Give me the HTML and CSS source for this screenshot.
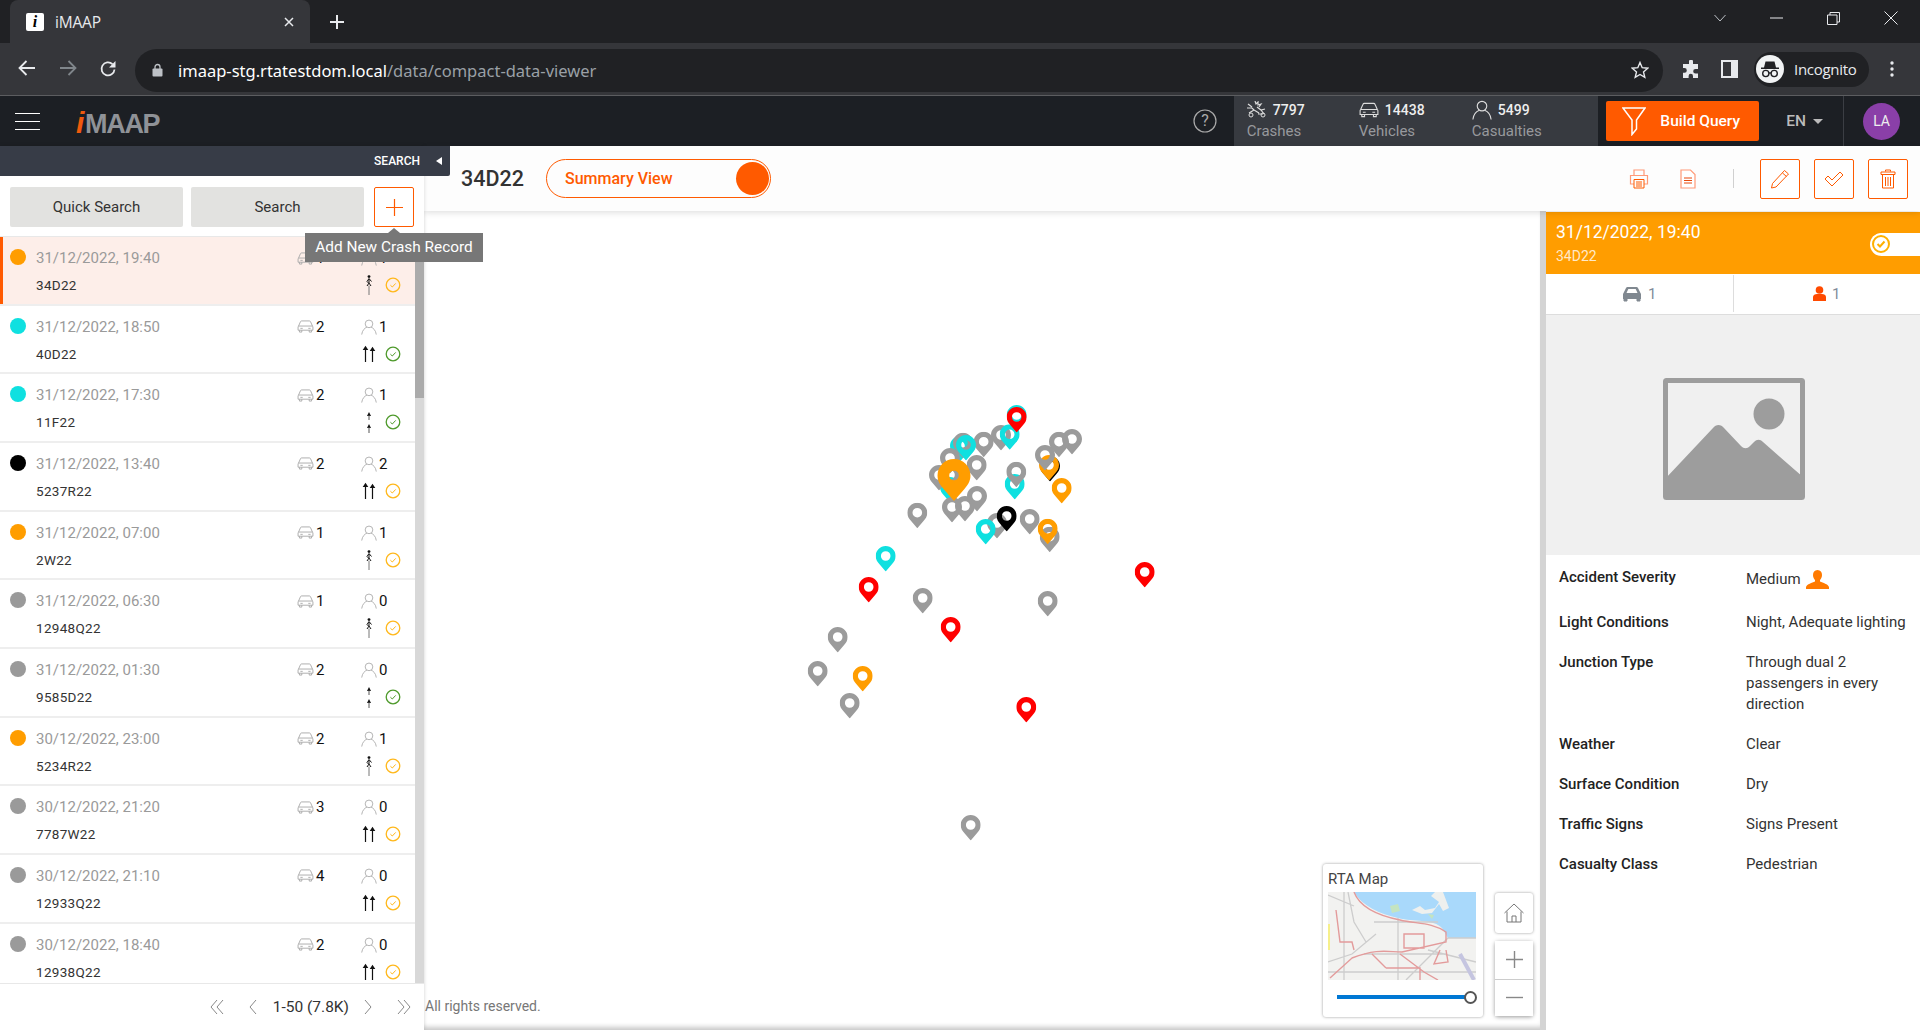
FILE: index.html
```html
<!DOCTYPE html>
<html lang="en">
<head>
<meta charset="utf-8">
<title>iMAAP</title>
<link rel="stylesheet" href="styles.css">
</head>
<body>
<svg class="defs" width="0" height="0" aria-hidden="true">
  <symbol id="car" viewBox="0 0 18 14"><path d="M1.5 6.5 3.6 1.8C3.8 1.3 4.2 1 4.8 1h8.4c.6 0 1 .3 1.2.8l2.1 4.7M1 7.5c0-.6.4-1 1-1h14c.6 0 1 .4 1 1v3.5H1zM2.5 11v2h2.5v-2M13 11v2h2.5v-2M3.5 9h2.5M12 9h2.5" fill="none" stroke="currentColor" stroke-width="1"/></symbol>
  <symbol id="person" viewBox="0 0 18 18"><circle cx="9" cy="5.5" r="4.3" fill="none" stroke="currentColor"/><path d="M.8 17.5C1.4 12.6 4.4 10 6.6 9.2M17.2 17.5C16.6 12.6 13.6 10 11.4 9.2" fill="none" stroke="currentColor"/></symbol>
  <symbol id="check" viewBox="0 0 16 16"><circle cx="8" cy="8" r="6.8" fill="none" stroke="currentColor" stroke-width="1.3"/><path d="M5.4 8.2 7.3 10 10.7 6.4" fill="none" stroke="currentColor" stroke-width="1"/></symbol>
  <symbol id="arrows2" viewBox="0 0 14 18"><path d="M3.5 17V4M10.5 17V5" stroke="#111" stroke-width="1.2" fill="none"/><path d="M3.5 .8 6.3 5H.7zM10.5 1.8 13.3 6H7.7z" fill="#111"/></symbol>
  <symbol id="arrows1" viewBox="0 0 14 22"><path d="M7 1 9 5H5z M7 13 9 17H5z" fill="#111"/><path d="M7 4V9M7 16V22" stroke="#555" stroke-width="1" fill="none"/></symbol>
  <symbol id="ped" viewBox="0 0 14 20"><circle cx="7" cy="1.6" r="1.4" fill="#111"/><path d="M7 3.5 5 6.5l1.500 1.500M7 3.500 9.500 6.500M7 4V8L5 11M7 8 9 11" stroke="#111" stroke-width="1" fill="none"/><path d="M7 10.500V20" stroke="#777" stroke-width="1" fill="none"/></symbol>
  <symbol id="pin" viewBox="0 0 20 25.500"><path fill-rule="evenodd" fill="currentColor" d="M10 0C4.500 0 0 4.500 0 10c0 3.600 1.800 6 3.800 8.300L10 25.500l6.200-7.200C18.200 16 20 13.600 20 10 20 4.500 15.500 0 10 0zM10 5.200a4.800 4.800 0 1 1 0 9.600 4.800 4.800 0 0 1 0-9.600z"/></symbol>
  <symbol id="chev-l" viewBox="0 0 10 16"><path d="M8 1 2 8l6 7" fill="none" stroke="currentColor"/></symbol>
  <symbol id="chev-ll" viewBox="0 0 16 16"><path d="M8 1 2 8l6 7M14 1 8 8l6 7" fill="none" stroke="currentColor"/></symbol>
  <symbol id="chev-r" viewBox="0 0 10 16"><path d="M2 1l6 7-6 7" fill="none" stroke="currentColor"/></symbol>
  <symbol id="chev-rr" viewBox="0 0 16 16"><path d="M2 1l6 7-6 7M8 1l6 7-6 7" fill="none" stroke="currentColor"/></symbol>
</svg>

<div class="tabstrip">
  <div class="tab">
    <span class="favicon"><span class="favicon-i">i</span></span>
    <span class="tab-title">iMAAP</span>
    <svg class="tab-close" width="10" height="10" viewBox="0 0 10 10"><path d="M1 1l8 8M9 1 1 9" stroke="#e8eaed" stroke-width="1.500"/></svg>
  </div>
  <svg class="new-tab" width="14" height="14" viewBox="0 0 14 14"><path d="M7 0v14M0 7h14" stroke="#e8eaed" stroke-width="2"/></svg>
  <div class="window-controls">
    <svg width="12" height="8" viewBox="0 0 12 8"><path d="M.5 1 6 7l5.500-6" fill="none" stroke="#bdc1c6"/></svg>
    <svg width="13" height="2" viewBox="0 0 13 2"><path d="M0 1h13" stroke="#e8eaed"/></svg>
    <svg width="13" height="13" viewBox="0 0 13 13"><path d="M.5 3h9.500v9.500H.5zM3 3V.5h9.500V10H10" fill="none" stroke="#e8eaed"/></svg>
    <svg width="14" height="14" viewBox="0 0 14 14"><path d="M.5.500l13 13M13.500.500l-13 13" stroke="#e8eaed"/></svg>
  </div>
</div>

<div class="toolbar">
  <div class="nav-icons">
    <svg width="18" height="16" viewBox="0 0 18 16"><path d="M17 8H2M8.500 1 1.500 8l7 7" fill="none" stroke="#e8eaed" stroke-width="1.800"/></svg>
    <svg width="18" height="16" viewBox="0 0 18 16"><path d="M1 8h15M9.500 1l7 7-7 7" fill="none" stroke="#80868b" stroke-width="1.800"/></svg>
    <svg width="18" height="18" viewBox="0 0 18 18"><path d="M15.500 9.500A6.500 6.500 0 1 1 13.500 4.200" fill="none" stroke="#e8eaed" stroke-width="1.800"/><path d="M16.500 1v6.500H10z" fill="#e8eaed"/></svg>
  </div>
  <div class="omnibox">
    <svg width="11" height="14" viewBox="0 0 11 14"><path d="M3 6V4a2.500 2.500 0 0 1 5 0v2" fill="none" stroke="#bdc1c6" stroke-width="1.300"/><rect x=".5" y="5.500" width="10" height="8" rx="1" fill="#bdc1c6"/></svg>
    <span class="url"><span class="url-host">imaap-stg.rtatestdom.local</span>/data/compact-data-viewer</span>
    <svg class="star" width="18" height="18" viewBox="0 0 18 18"><path d="M9 1.500 11.200 6.700l5.600.5-4.300 3.700 1.300 5.500L9 13.500l-4.800 2.900 1.300-5.500L1.200 7.200l5.600-.5z" fill="none" stroke="#e8eaed" stroke-width="1.400"/></svg>
  </div>
  <svg class="tool-ext" width="19" height="19" viewBox="0 0 19 19"><path d="M7 1.500a2 2 0 0 1 4 0V4h5v5h-2.500a2.300 2.300 0 0 0 0 4.600H16V18H11v-2a2.200 2.200 0 0 0-4.400 0v2H1v-5.300h1.500a2.300 2.300 0 0 0 0-4.600H1V4h6z" fill="#e8eaed"/></svg>
  <svg class="tool-side" width="17" height="18" viewBox="0 0 17 18"><path d="M0 0h17v18H0zM2 2v14h8V2z" fill="#e8eaed" fill-rule="evenodd"/></svg>
  <div class="incognito">
    <svg width="28" height="28" viewBox="0 0 28 28"><circle cx="14" cy="14" r="14" fill="#f1f3f4"/><path d="M9.500 6.500h9l1.500 6h3v1.500H5v-1.500h3z" fill="#202124"/><circle cx="9.800" cy="18.500" r="3.100" fill="none" stroke="#202124" stroke-width="1.400"/><circle cx="18.200" cy="18.500" r="3.100" fill="none" stroke="#202124" stroke-width="1.400"/><path d="M12.800 18h2.400" stroke="#202124" stroke-width="1.400"/></svg>
    <span class="incognito-label">Incognito</span>
  </div>
  <svg class="tool-menu" width="4" height="16" viewBox="0 0 4 16"><circle cx="2" cy="2" r="1.700" fill="#e8eaed"/><circle cx="2" cy="8" r="1.700" fill="#e8eaed"/><circle cx="2" cy="14" r="1.700" fill="#e8eaed"/></svg>
</div>

<header class="app-header">
  <svg class="hamburger" width="25" height="17" viewBox="0 0 25 17"><path d="M0 .5h25M0 8.500h25M0 16.500h25" stroke="#fff"/></svg>
  <div class="logo"><span class="logo-i">i</span><span class="logo-rest">MAAP</span></div>
  <svg class="help" width="24" height="24" viewBox="0 0 24 24"><circle cx="12" cy="12" r="11" fill="none" stroke="#aaa" stroke-width="1.200"/><text x="12" y="17" text-anchor="middle" class="help-q">?</text></svg>
  <div class="stats">
    <div class="stat stat-crashes">
      <div class="stat-top">
        <svg width="20" height="17" viewBox="0 0 20 17"><path d="M8 0l1 3 2-2 0 3 3-1-2 3M1 3l4 3M0 7h5l2 2M2 12l5-3M7 9l5 3M10 6l4 3 4-1M11 13h5M14 9l3 4" fill="none" stroke="#dcdcdc" stroke-width="1.200"/><circle cx="4" cy="14" r="2" fill="none" stroke="#dcdcdc"/><circle cx="16" cy="14" r="2" fill="none" stroke="#dcdcdc"/></svg>
        <span class="stat-num">7797</span>
      </div>
      <div class="stat-label">Crashes</div>
    </div>
    <div class="stat stat-vehicles">
      <div class="stat-top">
        <svg width="20" height="16"><use href="#car" class="stat-ic"/></svg>
        <span class="stat-num">14438</span>
      </div>
      <div class="stat-label">Vehicles</div>
    </div>
    <div class="stat stat-casualties">
      <div class="stat-top">
        <svg width="20" height="20"><use href="#person" class="stat-ic"/></svg>
        <span class="stat-num">5499</span>
      </div>
      <div class="stat-label">Casualties</div>
    </div>
  </div>
  <button class="build-query">
    <svg width="24" height="29" viewBox="0 0 24 29"><path d="M1 1h22l-8.500 12v9L10 27.500V13z" fill="none" stroke="#fff" stroke-width="1.500"/></svg>
    <span>Build Query</span>
  </button>
  <div class="lang"><span>EN</span><span class="lang-caret"></span></div>
  <div class="user"><span class="avatar">LA</span></div>
</header>

<main class="main">
  <aside class="sidebar">
    <div class="search-strip"><span>SEARCH</span><span class="strip-caret"></span></div>
    <div class="filters">
      <button class="filter-btn">Quick Search</button>
      <button class="filter-btn">Search</button>
      <button class="add-btn"><svg width="17" height="17" viewBox="0 0 17 17"><path d="M8.500 0v17M0 8.500h17" stroke="#ff5a00" stroke-width="1.200"/></svg></button>
      <div class="tooltip">Add New Crash Record</div>
    </div>
    <div class="list-wrap">
      <ul class="crash-list">
        <li class="crash active"><span class="dot orange"></span><span class="c-date">31/12/2022, 19:40</span><span class="c-car"><svg width="17" height="13"><use href="#car"/></svg><b>1</b></span><span class="c-per"><svg width="16" height="16"><use href="#person"/></svg><b>1</b></span><span class="c-id">34D22</span><svg class="c-road" width="14" height="20"><use href="#ped"/></svg><svg class="c-check amber" width="16" height="16"><use href="#check"/></svg></li>
        <li class="crash"><span class="dot cyan"></span><span class="c-date">31/12/2022, 18:50</span><span class="c-car"><svg width="17" height="13"><use href="#car"/></svg><b>2</b></span><span class="c-per"><svg width="16" height="16"><use href="#person"/></svg><b>1</b></span><span class="c-id">40D22</span><svg class="c-road" width="14" height="18"><use href="#arrows2"/></svg><svg class="c-check green" width="16" height="16"><use href="#check"/></svg></li>
        <li class="crash"><span class="dot cyan"></span><span class="c-date">31/12/2022, 17:30</span><span class="c-car"><svg width="17" height="13"><use href="#car"/></svg><b>2</b></span><span class="c-per"><svg width="16" height="16"><use href="#person"/></svg><b>1</b></span><span class="c-id">11F22</span><svg class="c-road" width="14" height="22"><use href="#arrows1"/></svg><svg class="c-check green" width="16" height="16"><use href="#check"/></svg></li>
        <li class="crash"><span class="dot black"></span><span class="c-date">31/12/2022, 13:40</span><span class="c-car"><svg width="17" height="13"><use href="#car"/></svg><b>2</b></span><span class="c-per"><svg width="16" height="16"><use href="#person"/></svg><b>2</b></span><span class="c-id">5237R22</span><svg class="c-road" width="14" height="18"><use href="#arrows2"/></svg><svg class="c-check amber" width="16" height="16"><use href="#check"/></svg></li>
        <li class="crash"><span class="dot orange"></span><span class="c-date">31/12/2022, 07:00</span><span class="c-car"><svg width="17" height="13"><use href="#car"/></svg><b>1</b></span><span class="c-per"><svg width="16" height="16"><use href="#person"/></svg><b>1</b></span><span class="c-id">2W22</span><svg class="c-road" width="14" height="20"><use href="#ped"/></svg><svg class="c-check amber" width="16" height="16"><use href="#check"/></svg></li>
        <li class="crash"><span class="dot gray"></span><span class="c-date">31/12/2022, 06:30</span><span class="c-car"><svg width="17" height="13"><use href="#car"/></svg><b>1</b></span><span class="c-per"><svg width="16" height="16"><use href="#person"/></svg><b>0</b></span><span class="c-id">12948Q22</span><svg class="c-road" width="14" height="20"><use href="#ped"/></svg><svg class="c-check amber" width="16" height="16"><use href="#check"/></svg></li>
        <li class="crash"><span class="dot gray"></span><span class="c-date">31/12/2022, 01:30</span><span class="c-car"><svg width="17" height="13"><use href="#car"/></svg><b>2</b></span><span class="c-per"><svg width="16" height="16"><use href="#person"/></svg><b>0</b></span><span class="c-id">9585D22</span><svg class="c-road" width="14" height="22"><use href="#arrows1"/></svg><svg class="c-check green" width="16" height="16"><use href="#check"/></svg></li>
        <li class="crash"><span class="dot orange"></span><span class="c-date">30/12/2022, 23:00</span><span class="c-car"><svg width="17" height="13"><use href="#car"/></svg><b>2</b></span><span class="c-per"><svg width="16" height="16"><use href="#person"/></svg><b>1</b></span><span class="c-id">5234R22</span><svg class="c-road" width="14" height="20"><use href="#ped"/></svg><svg class="c-check amber" width="16" height="16"><use href="#check"/></svg></li>
        <li class="crash"><span class="dot gray"></span><span class="c-date">30/12/2022, 21:20</span><span class="c-car"><svg width="17" height="13"><use href="#car"/></svg><b>3</b></span><span class="c-per"><svg width="16" height="16"><use href="#person"/></svg><b>0</b></span><span class="c-id">7787W22</span><svg class="c-road" width="14" height="18"><use href="#arrows2"/></svg><svg class="c-check amber" width="16" height="16"><use href="#check"/></svg></li>
        <li class="crash"><span class="dot gray"></span><span class="c-date">30/12/2022, 21:10</span><span class="c-car"><svg width="17" height="13"><use href="#car"/></svg><b>4</b></span><span class="c-per"><svg width="16" height="16"><use href="#person"/></svg><b>0</b></span><span class="c-id">12933Q22</span><svg class="c-road" width="14" height="18"><use href="#arrows2"/></svg><svg class="c-check amber" width="16" height="16"><use href="#check"/></svg></li>
        <li class="crash"><span class="dot gray"></span><span class="c-date">30/12/2022, 18:40</span><span class="c-car"><svg width="17" height="13"><use href="#car"/></svg><b>2</b></span><span class="c-per"><svg width="16" height="16"><use href="#person"/></svg><b>0</b></span><span class="c-id">12938Q22</span><svg class="c-road" width="14" height="18"><use href="#arrows2"/></svg><svg class="c-check amber" width="16" height="16"><use href="#check"/></svg></li>
      </ul>
      <div class="scrollbar"><div class="thumb"></div></div>
    </div>
    <div class="pager">
      <svg class="pg-dbl" width="16" height="16"><use href="#chev-ll"/></svg>
      <svg class="pg-sgl" width="10" height="16"><use href="#chev-l"/></svg>
      <span class="pg-text">1-50 (7.8K)</span>
      <svg class="pg-sgl" width="10" height="16"><use href="#chev-r"/></svg>
      <svg class="pg-dbl" width="16" height="16"><use href="#chev-rr"/></svg>
    </div>
  </aside>

  <section class="content">
    <div class="titlebar">
      <span class="case-id">34D22</span>
      <div class="view-toggle"><span>Summary View</span><span class="toggle-knob"></span></div>
      <div class="title-actions">
        <svg class="ta-icon" width="20" height="20" viewBox="0 0 20 20"><path d="M5 6V1h10v5M5 15H1.500V6.500h17V15H15" fill="none" stroke="#ff9a78" stroke-width="1.200"/><path d="M5 10.500h10v8.500H5z" fill="none" stroke="#ff5a00"/><path d="M7 13h6M7 15h6M7 17h6" stroke="#ff5a00"/></svg>
        <svg class="ta-icon" width="16" height="20" viewBox="0 0 16 20"><path d="M1 1h9.500L15 5.500V19H1z" fill="#fff" stroke="#ff9a78" stroke-width="1.200"/><path d="M4 9h8M4 11.500h8M4 14h8" stroke="#e8490c"/></svg>
        <span class="ta-sep"></span>
        <button class="ta-btn"><svg width="20" height="20" viewBox="0 0 20 20"><path d="M14.500 1.500 18.500 5 6 18 1.500 19 2.500 14.500zM12.500 4 16.500 7.500" fill="none" stroke="#ff5a00"/></svg></button>
        <button class="ta-btn"><svg width="20" height="16" viewBox="0 0 20 16"><path d="M1 8l3-3 4 4 8-8 3 3L8 15z" fill="none" stroke="#ff5a00"/></svg></button>
        <button class="ta-btn"><svg width="16" height="20" viewBox="0 0 16 20"><path d="M5.500 2.500V1h5v1.500M1 3h14v2.500H1zM2.500 5.500V19h11V5.500M5.500 8v9M8 8v9M10.500 8v9" fill="none" stroke="#ff5a00"/></svg></button>
      </div>
    </div>

    <div class="workspace">
      <div class="map">
        <svg class="map-pins" width="1116" height="818" viewBox="424 211 1116 818">
          <g class="pin-cyan"><use href="#pin" x="1006.700" y="405" width="20" height="25.500"/><use href="#pin" x="950" y="436" width="20" height="25.500"/><use href="#pin" x="940" y="477" width="20" height="25.500"/></g>
          <g class="pin-gray">
            <use href="#pin" x="907.300" y="502.700" width="20" height="25.500"/><use href="#pin" x="942" y="497" width="20" height="25.500"/><use href="#pin" x="955" y="496" width="20" height="25.500"/><use href="#pin" x="967" y="486" width="20" height="25.500"/><use href="#pin" x="987" y="513" width="20" height="25.500"/><use href="#pin" x="1019.700" y="509" width="20" height="25.500"/><use href="#pin" x="1039.700" y="526.700" width="20" height="25.500"/><use href="#pin" x="991" y="425" width="20" height="25.500"/><use href="#pin" x="973.700" y="431.700" width="20" height="25.500"/><use href="#pin" x="966.700" y="455" width="20" height="25.500"/><use href="#pin" x="953" y="432.700" width="20" height="25.500"/><use href="#pin" x="940" y="448" width="20" height="25.500"/><use href="#pin" x="929" y="465" width="20" height="25.500"/><use href="#pin" x="940" y="465" width="20" height="25.500"/><use href="#pin" x="1062" y="429" width="20" height="25.500"/><use href="#pin" x="1049" y="431.700" width="20" height="25.500"/>
            <use href="#pin" x="827.700" y="627" width="20" height="25.500"/><use href="#pin" x="807.700" y="661" width="20" height="25.500"/><use href="#pin" x="839.700" y="693" width="20" height="25.500"/><use href="#pin" x="912.700" y="588" width="20" height="25.500"/><use href="#pin" x="1037.700" y="591" width="20" height="25.500"/><use href="#pin" x="960.700" y="815" width="20" height="25.500"/>
          </g>
          <g class="pin-black"><use href="#pin" x="1040" y="456" width="20" height="25.500"/></g>
          <g class="pin-orange"><use href="#pin" x="1039" y="455" width="20" height="25.500"/></g>
          <g class="pin-gray"><use href="#pin" x="1035" y="445" width="20" height="25.500"/></g>
          <g class="pin-cyan"><use href="#pin" x="975.700" y="519" width="20" height="25.500"/><use href="#pin" x="1004.700" y="474" width="20" height="25.500"/><use href="#pin" x="999.700" y="424.300" width="20" height="25.500"/><use href="#pin" x="956" y="435" width="20" height="25.500"/><use href="#pin" x="875.700" y="546" width="20" height="25.500"/></g>
          <g class="pin-gray"><use href="#pin" x="1006.300" y="461.700" width="20" height="25.500"/></g>
          <g class="pin-black"><use href="#pin" x="996.700" y="506" width="20" height="25.500"/></g>
          <g class="pin-orange"><use href="#pin" x="944" y="465.500" width="20" height="25.500"/><use href="#pin" x="937" y="459" width="34" height="42"/><use href="#pin" x="1037.700" y="518.700" width="20" height="25.500"/><use href="#pin" x="1051.700" y="478" width="20" height="25.500"/><use href="#pin" x="852.700" y="666" width="20" height="25.500"/></g>
          <g class="pin-red"><use href="#pin" x="1006.700" y="407" width="20" height="25.500"/><use href="#pin" x="858.700" y="577" width="20" height="25.500"/><use href="#pin" x="940.700" y="617" width="20" height="25.500"/><use href="#pin" x="1134.700" y="562" width="20" height="25.500"/><use href="#pin" x="1016.300" y="697" width="20" height="25.500"/></g>
        </svg>
        <div class="map-widgets">
          <div class="basemap">
            <div class="basemap-title">RTA Map</div>
            <svg class="basemap-thumb" width="148" height="88" viewBox="0 0 148 88">
              <rect width="148" height="88" fill="#f2f2f0"/>
              <path d="M26 0C34 14 52 22 70 26 C86 30 106 27 114 36 L120 46 H148 V0Z" fill="#a9d9fb"/>
              <path d="M84 18l8-4 5 4 10-2 4-6-8-6 4-4h8l6 16-6 3-4-7-7 9-10 1z" fill="#eef0ee"/>
              <path d="M62 14l8-2 2 7-8 2z" fill="#c4e4c0"/>
              <path d="M100 22l6 1-2 4z" fill="#c4e4c0"/>
              <path d="M0 3 L26 14 M20 0 L26 30 L38 50 M70 26 V88 M0 70 L24 62 L48 42 M78 88 L120 46 H148 M16 0 V88 M0 80 H148 M100 58 L148 70 M36 62 H118 M46 30 H110" fill="none" stroke="#cdcdcd" stroke-width="1.300"/>
              <path d="M26 0C32 16 52 24 72 28 C88 32 104 30 118 40 V50 L74 60 C60 60 50 56 24 66 L2 86 M8 18 L12 50 H24 L26 58 M76 42 H96 V56 H76ZM72 62 L96 80 110 88M58 76 H92 V88M112 58 L106 72 L120 70 L118 58M44 62 L58 76" fill="none" stroke="#e39b9b" stroke-width="1.400"/>
              <path d="M132 62 L146 88" stroke="#c5c5e0" stroke-width="4"/>
              <path d="M1 32V58" stroke="#f6ef8a" stroke-width="2"/>
            </svg>
            <div class="basemap-slider"><span class="slider-track"></span><span class="slider-thumb"></span></div>
          </div>
          <div class="map-buttons">
            <button class="map-btn"><svg width="20" height="20" viewBox="0 0 20 20"><path d="M.5 10 10 1l9.500 9M3 8.500V19h14V8.500M8 19v-6h4v6" fill="none" stroke="#777" stroke-width="1"/></svg></button>
            <div class="zoom-stack">
              <button class="map-btn zoom-btn"><svg width="17" height="17" viewBox="0 0 17 17"><path d="M8.500 0v17M0 8.500h17" stroke="#888" stroke-width="1.400"/></svg></button>
              <button class="map-btn zoom-btn"><svg width="17" height="3" viewBox="0 0 17 3"><path d="M0 1.500h17" stroke="#888" stroke-width="1.400"/></svg></button>
            </div>
          </div>
        </div>
        <div class="copyright">All rights reserved.</div>
      </div>

      <aside class="detail">
        <div class="detail-head">
          <div>
            <div class="dh-date">31/12/2022, 19:40</div>
            <div class="dh-id">34D22</div>
          </div>
          <div class="dh-toggle"><svg width="22" height="22" viewBox="0 0 22 22"><circle cx="11" cy="11" r="10.500" fill="#fff"/><circle cx="11" cy="11" r="8" fill="none" stroke="#ffb000" stroke-width="2"/><path d="M7.500 11l2.500 2.500 4.500-5" fill="none" stroke="#ffb000" stroke-width="2"/></svg></div>
        </div>
        <div class="detail-tabs">
          <div class="dt"><svg width="20" height="16" viewBox="0 0 20 16"><path d="M1 8 4 2c.3-.7.800-1 1.500-1h9c.7 0 1.200.3 1.500 1l3 6v5H1z" fill="#808890"/><path d="M4.500 7l1.800-4h7.400l1.800 4z" fill="#fff"/><path d="M2 12v3h3v-3M15 12v3h3v-3" fill="#808890" stroke="#808890"/></svg><span>1</span></div>
          <div class="dt"><svg width="13" height="15" viewBox="0 0 13 15"><circle cx="6.500" cy="4" r="3.800" fill="#ff4a00"/><path d="M0 15v-4c0-2 2-3 4-3h5c2 0 4 1 4 3v4z" fill="#ff4a00"/></svg><span>1</span></div>
        </div>
        <div class="photo">
          <svg width="142" height="122" viewBox="0 0 142 122"><rect x="2.500" y="2.500" width="137" height="117" rx="1" fill="none" stroke="#9d9d9d" stroke-width="5"/><circle cx="106" cy="36" r="15.500" fill="#9d9d9d"/><path d="M2 101 L50 50 C53 46 58 46 61 50 L78 68 C81 71 84 71 87 68 L91 64 C94 61 97 61 100 64 L140 99 V120 H2Z" fill="#9d9d9d"/></svg>
        </div>
        <dl class="facts">
          <div class="fact fact-sev"><dt>Accident Severity</dt><dd>Medium <svg class="sev-ic" width="23" height="19" viewBox="0 0 23 19"><path d="M11.500 0C8.500 0 7 2.200 7 5c0 2 .8 3.800 2 5v1.500C6 13 1 14 0 17v2h23v-2c-1-3-6-4-9-5.500V10c1.200-1.200 2-3 2-5 0-2.800-1.500-5-4.500-5z" fill="#ff7a00"/></svg></dd></div>
          <div class="fact"><dt>Light Conditions</dt><dd>Night, Adequate lighting</dd></div>
          <div class="fact"><dt>Junction Type</dt><dd>Through dual 2 passengers in every direction</dd></div>
          <div class="fact"><dt>Weather</dt><dd>Clear</dd></div>
          <div class="fact"><dt>Surface Condition</dt><dd>Dry</dd></div>
          <div class="fact"><dt>Traffic Signs</dt><dd>Signs Present</dd></div>
          <div class="fact"><dt>Casualty Class</dt><dd>Pedestrian</dd></div>
        </dl>
      </aside>
    </div>
  </section>
</main>
</body>
</html>
```

FILE: styles.css
```css
* { box-sizing: border-box; }
html, body { margin: 0; padding: 0; }
body {
  width: 1920px;
  height: 1030px;
  overflow: hidden;
  background: #fff;
  font-family: Roboto, "Liberation Sans", sans-serif;
  font-size: 14px;
  color: #333;
  display: flex;
  flex-direction: column;
}
button { font-family: inherit; cursor: pointer; }
.defs { position: absolute; }

/* browser chrome */
.tabstrip {
  height: 43px;
  flex: none;
  background: #202124;
  display: flex;
  align-items: flex-end;
  padding-left: 10px;
}
.tab {
  width: 300px;
  height: 43px;
  background: #35363a;
  border-radius: 8px 8px 0 0;
  display: flex;
  align-items: center;
  padding: 0 16px;
}
.favicon {
  width: 18px;
  height: 18px;
  background: #fff;
  border-radius: 2px;
  display: flex;
  justify-content: center;
  align-items: center;
}
.favicon-i { font: italic 700 16px "Liberation Serif", serif; color: #000; line-height: 1; }
.tab-title { margin-left: 11px; color: #e8eaed; font: 15.500px "Open Sans", sans-serif; letter-spacing: -.2px; flex: 1; }
.new-tab { margin: 0 0 14px 20px; }
.window-controls {
  margin-left: auto;
  height: 43px;
  display: flex;
  align-items: center;
  gap: 44px;
  padding: 0 22px 7px 0;
}
.toolbar {
  height: 52px;
  flex: none;
  background: #35363a;
  border-bottom: 0;
  display: flex;
  align-items: center;
  padding: 0 0 0 18px;
}
.nav-icons { width: 117px; display: flex; justify-content: space-between; padding-right: 18px; }
.omnibox {
  width: 1528px;
  height: 43px;
  margin-top: 2px;
  background: #202124;
  border-radius: 22px;
  display: flex;
  align-items: center;
  padding: 0 14px 0 17px;
}
.url { margin-left: 15px; font: 16.500px "Noto Sans", sans-serif; color: #9aa0a6; flex: 1; }
.url-host { color: #fff; }
.tool-ext { margin-left: 19px; }
.tool-side { margin-left: 20px; }
.incognito {
  margin-left: 16px;
  width: 115px;
  height: 35px;
  border-radius: 18px;
  background: #202124;
  display: flex;
  align-items: center;
  padding-left: 2px;
}
.incognito-label { margin-left: 10px; color: #e8eaed; font: 15px "Open Sans", sans-serif; letter-spacing: -.3px; }
.tool-menu { margin-left: 21px; }

/* app header */
.app-header {
  height: 51px;
  flex: none;
  background: #1c1f24;
  border-top: 1px solid #5c5d60;
  display: flex;
  align-items: center;
  padding-left: 15px;
}
.logo { margin: 3px 0 0 36px; font: 700 30px "Liberation Sans", sans-serif; letter-spacing: -1.300px; line-height: 1; width: 86px; }
.logo-i { color: #f05a0e; font-style: italic; margin-right: 2px; }
.logo-rest { color: #8f9297; font-size: 27px; }
.help { margin-left: 1031px; }
.help-q { font: 16px Roboto, sans-serif; fill: #aaa; }
.stats {
  margin-left: 17px;
  width: 365px;
  height: 100%;
  background: #373a40;
  display: flex;
  padding-left: 13px;
}
.stat { padding-top: 2px; }
.stat-crashes { width: 112px; }
.stat-vehicles { width: 113px; }
.stat-top { height: 23px; display: flex; align-items: center; color: #dcdcdc; }
.stat-ic { color: #dcdcdc; }
.stat-num { margin-left: 6px; font-size: 14px; font-weight: 500; color: #eee; }
.stat-label { margin-top: 1px; font-size: 15px; color: #97999d; }
.build-query {
  margin-left: 8px;
  width: 153px;
  height: 40px;
  background: #ff5a00;
  border: 0;
  border-radius: 2px;
  color: #fff;
  font-size: 15.500px;
  font-weight: 500;
  display: flex;
  align-items: center;
  padding: 0 0 0 16px;
  gap: 14px;
}
.lang { margin-left: 27px; width: 57px; color: #bbb; font-size: 15.500px; font-weight: 500; display: flex; align-items: center; gap: 7px; }
.lang-caret { border: 5px solid transparent; border-top: 5px solid #bbb; border-bottom: 0; }
.user { width: 77px; height: 100%; border-left: 1px solid #3b3e44; display: flex; align-items: center; padding-left: 19px; }
.avatar {
  width: 37px;
  height: 37px;
  border-radius: 50%;
  background: #8a3fa8;
  color: #eee;
  font-size: 14px;
  display: flex;
  align-items: center;
  justify-content: center;
}

/* layout */
.main { flex: 1; display: flex; min-height: 0; }
.sidebar {
  width: 424px;
  flex: none;
  display: flex;
  flex-direction: column;
  background: #fff;
  position: relative;
  z-index: 2;
  box-shadow: 0 0 4px rgba(0,0,0,.15);
}
.search-strip {
  width: 450px;
  height: 30px;
  flex: none;
  background: #373c47;
  color: #fff;
  font-size: 12px;
  font-weight: 500;
  display: flex;
  align-items: center;
  justify-content: flex-end;
  padding-right: 8px;
  border-radius: 0 0 2px 0;
}
.strip-caret { margin-left: 16px; border: 4px solid transparent; border-right: 6px solid #fff; border-left: 0; }
.filters { height: 61px; flex: none; padding: 11px 10px 0; display: flex; position: relative; border-bottom: 1px solid #e8e8e8; }
.filter-btn {
  width: 173px;
  height: 40px;
  margin-right: 8px;
  background: #e2e2e0;
  border: 0;
  border-radius: 2px;
  color: #333;
  font-size: 15px;
}
.filter-btn + .filter-btn { margin-right: 10px; }
.add-btn {
  width: 40px;
  height: 40px;
  padding: 0;
  background: #fff;
  border: 1px solid #ff5a00;
  border-radius: 2px;
  display: flex;
  align-items: center;
  justify-content: center;
}
.tooltip {
  position: absolute;
  left: 305px;
  top: 57px;
  width: 178px;
  height: 29px;
  background: #777;
  color: #fff;
  font-size: 15.400px;
  line-height: 29px;
  text-align: center;
  white-space: nowrap;
  z-index: 5;
}
.tooltip::before {
  content: "";
  position: absolute;
  left: 83px;
  top: -5px;
  border: 6px solid transparent;
  border-bottom: 5px solid #777;
  border-top: 0;
}
.list-wrap { flex: 1; min-height: 0; display: flex; border-bottom: 1px solid #e8e8e8; }
.crash-list { flex: 1; margin: 0; padding: 0; list-style: none; overflow: hidden; }
.crash {
  height: 68.670px;
  padding-top: 6px;
  border-bottom: 2px solid #eee;
  display: grid;
  grid-template-columns: 36px 261px 64px 24px 24px;
  grid-template-rows: 30px 24px;
  align-items: center;
}
.crash.active { background: #fdeee9; box-shadow: inset 3px 0 0 #ff5a00; }
.dot { width: 16px; height: 16px; border-radius: 50%; margin-left: 10px; margin-top: -2px; }
.dot.orange { background: #ff9d00; }
.dot.cyan { background: #0fe0e0; }
.dot.black { background: #000; }
.dot.gray { background: #9a9a9a; }
.c-date { color: #9a9a9a; font-size: 15px; }
.c-car, .c-per { display: flex; align-items: center; gap: 2px; color: #aaa; grid-column: span 1; }
.c-car b, .c-per b { color: #111; font-weight: 400; font-size: 15px; }
.c-per { grid-column: 4 / span 2; }
.c-id { grid-column: 2 / span 2; font-size: 13.500px; color: #333; letter-spacing: .3px; }
.c-road { grid-column: 4; justify-self: start; margin-left: 1px; }
.c-check { grid-column: 5; }
.amber { color: #ffb81c; }
.green { color: #4f9a2c; }
.scrollbar { width: 9px; background: #d8d8d8; flex: none; }
.thumb { height: 161px; background: #ababab; }
.pager {
  height: 46px;
  flex: none;
  display: flex;
  align-items: center;
  justify-content: flex-end;
  padding-right: 12px;
  color: #888;
}
.pg-sgl { margin-left: 23px; }
.pg-text { margin-left: 15px; color: #333; font-size: 15.500px; }
.pg-text + .pg-sgl { margin-left: 14px; }
.pg-text + .pg-sgl + .pg-dbl { margin-left: 23px; }

/* content */
.content { flex: 1; min-width: 0; display: flex; flex-direction: column; }
.titlebar {
  height: 65px;
  flex: none;
  background: #fdfdfd;
  box-shadow: 0 2px 6px rgba(0,0,0,.12);
  display: flex;
  align-items: center;
  padding: 0 12px 0 37px;
  position: relative;
  z-index: 1;
}
.case-id { font-size: 21.500px; font-weight: 500; color: #333; width: 85px; }
.view-toggle {
  width: 225px;
  height: 39px;
  border: 1px solid #ff5a00;
  border-radius: 20px;
  display: flex;
  align-items: center;
  justify-content: space-between;
  padding: 0 1px 0 18px;
  color: #ff5a00;
  font-size: 16px;
  font-weight: 500;
}
.toggle-knob { width: 33px; height: 33px; border-radius: 50%; background: #ff5a00; }
.title-actions { margin-left: auto; display: flex; align-items: center; }
.ta-icon { margin-right: 31px; }
.ta-sep { width: 1px; height: 19px; background: #d0d0d0; margin-right: 26px; margin-left: 6px; }
.ta-btn {
  width: 40px;
  height: 40px;
  margin-left: 14px;
  padding: 0;
  background: #fff;
  border: 1px solid #ff5a00;
  border-radius: 2px;
  display: flex;
  align-items: center;
  justify-content: center;
}
.ta-sep + .ta-btn { margin-left: 0; }

.workspace { flex: 1; min-height: 0; display: flex; }
.map { flex: 1; position: relative; background: #fff; box-shadow: inset 0 -6px 5px -3px rgba(0,0,0,.22); }
.map-pins { position: absolute; left: 0; top: 0; }
.pin-gray { color: #9b9b9b; }
.pin-cyan { color: #0fe0e0; }
.pin-red { color: #ff0000; }
.pin-orange { color: #ff9d00; }
.pin-black { color: #000; }
.map-widgets { position: absolute; right: 7px; bottom: 13px; display: flex; align-items: flex-end; gap: 12px; }
.basemap {
  width: 160px;
  height: 153px;
  background: #fff;
  border-radius: 3px;
  box-shadow: 0 0 3px rgba(0,0,0,.4);
  padding: 5px 5px;
}
.basemap-title { font-size: 15px; line-height: 20px; color: #444; margin-bottom: 3px; }
.basemap-thumb { display: block; filter: blur(.4px); }
.basemap-slider { position: relative; height: 12px; margin-top: 11px; }
.slider-track { position: absolute; left: 9px; top: 4px; width: 133px; height: 4px; background: #0078d4; }
.slider-thumb {
  position: absolute;
  left: 136px;
  top: 0;
  width: 13px;
  height: 13px;
  border-radius: 50%;
  background: #fff;
  border: 2px solid #555;
}
.map-buttons { display: flex; flex-direction: column; gap: 8px; margin-bottom: 1px; }
.map-btn {
  width: 38px;
  height: 40px;
  padding: 0;
  background: #fff;
  border: 0;
  border-radius: 3px;
  box-shadow: 0 0 3px rgba(0,0,0,.4);
  display: flex;
  align-items: center;
  justify-content: center;
}
.zoom-stack { box-shadow: 0 1px 4px rgba(0,0,0,.4); border-radius: 3px; }
.zoom-btn { height: 37.500px; box-shadow: none; border-radius: 0; }
.zoom-btn + .zoom-btn { border-top: 1px solid #ccc; }
.copyright { position: absolute; left: 1px; bottom: 16px; color: #777; font-size: 14px; }

/* detail */
.detail {
  width: 380px;
  flex: none;
  padding-top: 1px;
  border-left: 6px solid #d4d4d4;
  background: #fff;
}
.detail-head {
  height: 62px;
  background: #ff9d00;
  color: #fff;
  display: flex;
  justify-content: space-between;
  align-items: center;
  padding-left: 10px;
}
.dh-date { font-size: 17.500px; line-height: 24px; }
.dh-id { font-size: 14px; line-height: 20px; color: #ffe9c8; margin-top: 2px; }
.dh-toggle { width: 50px; height: 23px; margin-top: 2px; background: #fff; border-radius: 12px 0 0 12px; display: flex; align-items: center; }
.detail-tabs { height: 41px; display: flex; padding-bottom: 2px; border-top: 1px solid #fff; border-bottom: 1px solid #ddd; }
.dt {
  flex: 1;
  display: flex;
  align-items: center;
  justify-content: center;
  gap: 6px;
  color: #7f8c9a;
  font-size: 15px;
}
.dt + .dt { border-left: 1px solid #ddd; }
.photo {
  height: 240px;
  background: #f0f0f0;
  display: flex;
  align-items: center;
  justify-content: center;
  padding: 8px 0 0 2px;
}
.facts { margin: 0; padding: 12px 0 0 13px; }
.fact { display: grid; grid-template-columns: 187px 1fr; line-height: 21px; margin-bottom: 19px; }
.fact-sev { margin-bottom: 22px; }
.fact dt { font-weight: 500; color: #222; font-size: 15px; }
.fact dd { margin: 0; color: #333; font-size: 15px; padding-right: 6px; }
.fact-sev dd { display: flex; align-items: center; gap: 5px; height: 21px; margin-top: 2px; }
.sev-ic { display: block; }
```
